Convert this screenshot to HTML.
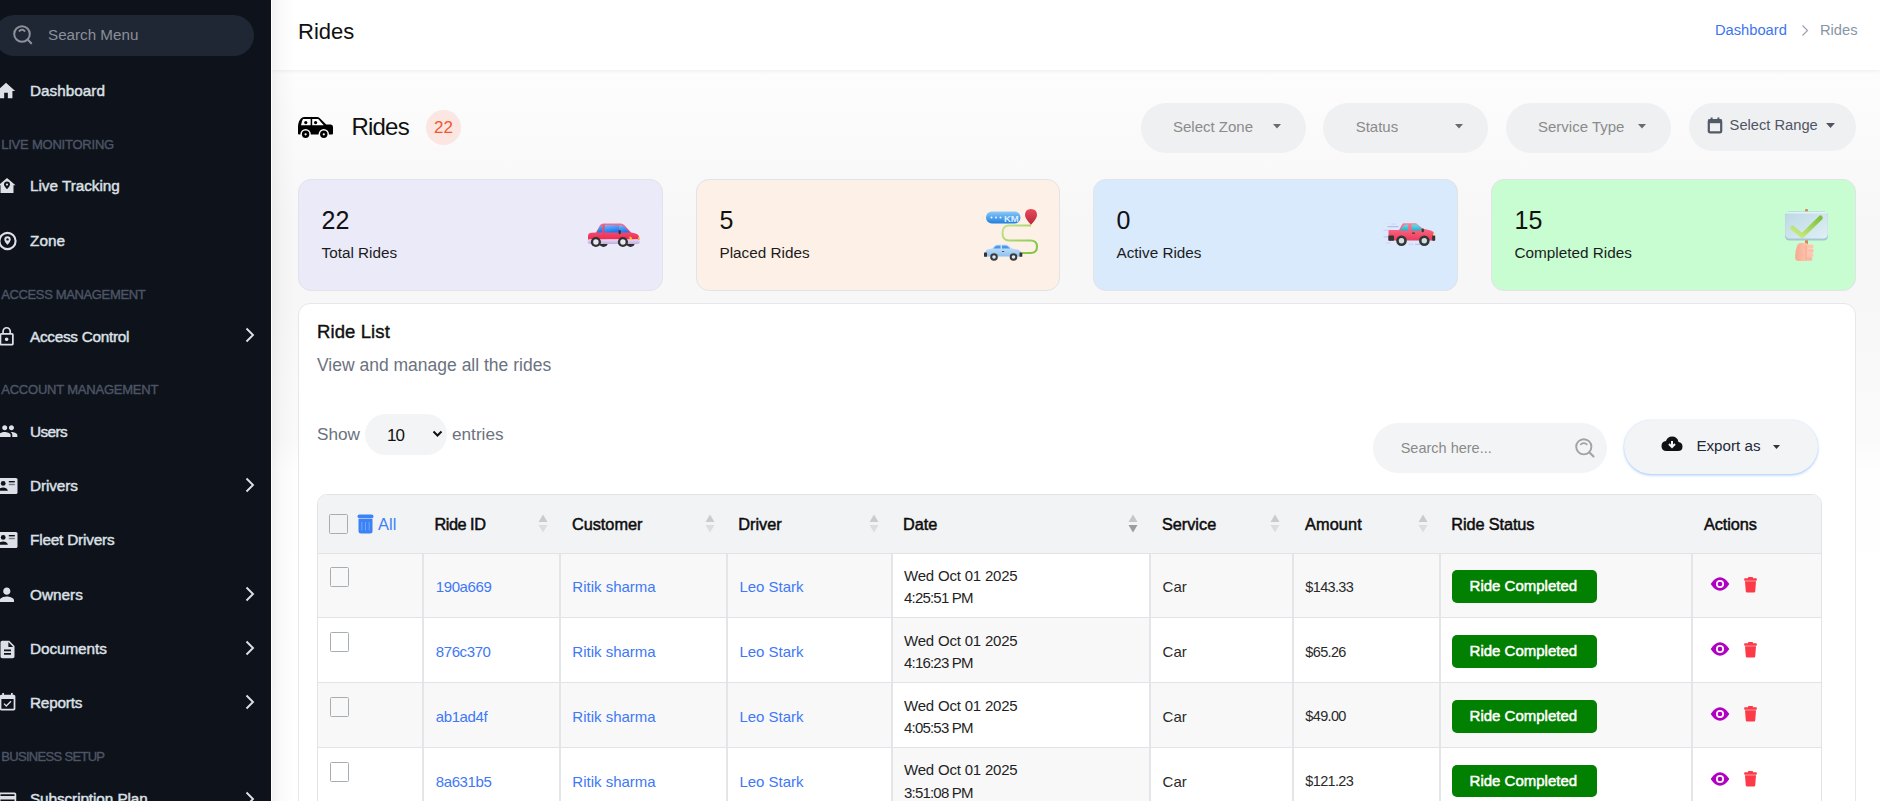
<!DOCTYPE html>
<html><head><meta charset="utf-8"><title>Rides</title>
<style>
*{box-sizing:border-box;margin:0;padding:0}
html,body{width:1880px;height:801px;overflow:hidden}
body{font-family:"Liberation Sans",sans-serif;background:#fff;position:relative;color:#111}
.abs{position:absolute}
.t{position:absolute;white-space:nowrap}
#sb{left:0;top:0;width:271px;height:801px;background:#0e121b;overflow:hidden}
#hdr{left:271px;top:0;width:1609px;height:70px;background:#fff;box-shadow:0 1px 4px rgba(0,0,0,.07)}
.pill{position:absolute;height:50px;border-radius:25px;background:#eff0f2}
.card{position:absolute;top:179px;height:112px;border-radius:13px;border:1px solid #e2e2e9}
#list{left:298px;top:303px;width:1558px;height:520px;background:#fff;border:1px solid #e6e7eb;border-radius:12px}
.cb{position:absolute;width:19px;height:19.7px;border:1.4px solid #a6aeb3;border-radius:1.5px;background:transparent}
</style></head>
<body>
<div class="abs" style="left:271px;top:70px;width:1609px;height:731px;background:linear-gradient(to bottom,#fdfdfd 0px,#f7f7f7 150px,#f7f7f7 230px,#f9f9f9 310px,#fafafa 370px,#fefefe 400px,#fff 731px)"></div>
<div id="hdr" class="abs"></div>
<div class="t" style="left:298px;top:21.18px;font-size:22px;line-height:22px;color:#111;font-weight:normal;letter-spacing:0px;">Rides</div>
<div class="t" style="left:1715px;top:23.16px;font-size:14.7px;line-height:14.7px;color:#3d74f2;font-weight:normal;letter-spacing:0px;">Dashboard</div>
<svg class="abs" style="left:1800px;top:24px" width="10" height="13" viewBox="0 0 10 13"><path d="M2.5 1.5 L7.5 6.5 L2.5 11.5" fill="none" stroke="#9aa3ad" stroke-width="1.2"/></svg>
<div class="t" style="left:1820px;top:23.16px;font-size:14.7px;line-height:14.7px;color:#8796a5;font-weight:normal;letter-spacing:0px;">Rides</div>

<div class="abs" style="left:271px;top:0;width:24px;height:801px;background:linear-gradient(to right,rgba(0,0,0,.055),rgba(0,0,0,.02) 10px,rgba(0,0,0,0))"></div>
<div class="abs" style="left:271px;top:0;width:1px;height:801px;background:#fff"></div>
<div id="sb" class="abs">
  <div class="abs" style="left:-6px;top:15px;width:260px;height:41px;border-radius:21px;background:#1f2735"></div>
  <svg class="abs" style="left:12px;top:24px" width="22" height="22" viewBox="0 0 22 22"><circle cx="10" cy="10" r="7.8" fill="none" stroke="#8b9099" stroke-width="2"/><path d="M7.4 7 Q10 4.6 12.6 7" fill="none" stroke="#8b9099" stroke-width="1.8" stroke-linecap="round"/><path d="M15.6 15.6 L19.2 19.2" stroke="#8b9099" stroke-width="2.1" stroke-linecap="round"/></svg>
  <div class="t" style="left:48px;top:27.13px;font-size:15.2px;line-height:15.2px;color:#8b9099;font-weight:normal;letter-spacing:0px;">Search Menu</div>
  <svg class="abs" style="left:-5.2px;top:79.9px" width="22" height="22" viewBox="0 0 24 24"><path fill="#dde0e6" d="M10 20v-6h4v6h5v-8h3L12 3 2 12h3v8z"/></svg>
  <div class="t" style="left:30px;top:83.05px;font-size:15.3px;line-height:15.3px;color:#dde0e6;font-weight:normal;letter-spacing:0.02px;-webkit-text-stroke:0.45px #dde0e6;">Dashboard</div>
  <div class="t" style="left:1.2px;top:137.80px;font-size:13px;line-height:13px;color:#4d5564;font-weight:normal;letter-spacing:-0.22px;-webkit-text-stroke:0.4px #4d5564;">LIVE MONITORING</div>
  <svg class="abs" style="left:-1px;top:177px" width="18" height="17" viewBox="0 0 18 17"><path fill="#dde0e6" d="M8 1 L16.5 8.2 H14.5 V16 H1.5 V8.2 H-0.5 Z"/><path fill="#0e121b" d="M8 4.6 a3 3 0 0 1 3 3 c0 2 -3 4.6 -3 4.6 c0 0 -3 -2.6 -3 -4.6 a3 3 0 0 1 3 -3z"/><circle cx="8" cy="7.6" r="1.1" fill="#dde0e6"/></svg>
  <div class="t" style="left:30px;top:178.35px;font-size:15.3px;line-height:15.3px;color:#dde0e6;font-weight:normal;letter-spacing:-0.03px;-webkit-text-stroke:0.45px #dde0e6;">Live Tracking</div>
  <svg class="abs" style="left:-2px;top:231px" width="20" height="20" viewBox="0 0 20 20"><circle cx="9.5" cy="10" r="8.1" fill="none" stroke="#dde0e6" stroke-width="2.1"/><path fill="#dde0e6" d="M9.5 5.2 a3.2 3.2 0 0 1 3.2 3.2 c0 2.2 -3.2 5.4 -3.2 5.4 c0 0 -3.2 -3.2 -3.2 -5.4 a3.2 3.2 0 0 1 3.2 -3.2z"/><circle cx="9.5" cy="8.4" r="1.2" fill="#0e121b"/></svg>
  <div class="t" style="left:30px;top:232.95px;font-size:15.3px;line-height:15.3px;color:#dde0e6;font-weight:normal;letter-spacing:0.04px;-webkit-text-stroke:0.45px #dde0e6;">Zone</div>
  <div class="t" style="left:1.2px;top:288.10px;font-size:13px;line-height:13px;color:#4d5564;font-weight:normal;letter-spacing:-0.36px;-webkit-text-stroke:0.4px #4d5564;">ACCESS MANAGEMENT</div>
  <svg class="abs" style="left:-3.7px;top:325.5px" width="21.3" height="21.3" viewBox="0 0 24 24"><path fill="#dde0e6" d="M12 17c1.1 0 2-.9 2-2s-.9-2-2-2-2 .9-2 2 .9 2 2 2zm6-9h-1V6c0-2.76-2.24-5-5-5S7 3.24 7 6v2H6c-1.1 0-2 .9-2 2v10c0 1.1.9 2 2 2h12c1.1 0 2-.9 2-2V10c0-1.1-.9-2-2-2zM8.9 6c0-1.71 1.39-3.1 3.1-3.1s3.1 1.39 3.1 3.1v2H8.9V6zM18 20H6V10h12v10z"/></svg>
  <div class="t" style="left:30px;top:328.65px;font-size:15.3px;line-height:15.3px;color:#dde0e6;font-weight:normal;letter-spacing:-0.27px;-webkit-text-stroke:0.45px #dde0e6;">Access Control</div>
  <svg class="abs" style="left:244px;top:327px" width="12" height="16" viewBox="0 0 12 16"><path d="M2.5 1.5 L9 8 L2.5 14.5" fill="none" stroke="#dde0e6" stroke-width="1.9"/></svg>
  <div class="t" style="left:1.2px;top:383.20px;font-size:13px;line-height:13px;color:#4d5564;font-weight:normal;letter-spacing:-0.21px;-webkit-text-stroke:0.4px #4d5564;">ACCOUNT MANAGEMENT</div>
  <svg class="abs" style="left:-2.3px;top:421px" width="20.2" height="20.2" viewBox="0 0 24 24"><path fill="#dde0e6" d="M16 11c1.66 0 2.99-1.34 2.99-3S17.66 5 16 5c-1.66 0-3 1.34-3 3s1.34 3 3 3zm-8 0c1.66 0 2.99-1.34 2.99-3S9.66 5 8 5C6.34 5 5 6.34 5 8s1.34 3 3 3zm0 2c-2.33 0-7 1.17-7 3.5V19h14v-2.5c0-2.33-4.67-3.5-7-3.5zm8 0c-.29 0-.62.02-.97.05 1.16.84 1.97 1.97 1.97 3.45V19h6v-2.5c0-2.33-4.67-3.5-7-3.5z"/></svg>
  <div class="t" style="left:30px;top:423.55px;font-size:15.3px;line-height:15.3px;color:#dde0e6;font-weight:normal;letter-spacing:-0.56px;-webkit-text-stroke:0.45px #dde0e6;">Users</div>
  <svg class="abs" style="left:-1px;top:478px" width="19" height="16" viewBox="0 0 19 16"><rect x="0" y="0" width="18.5" height="16" rx="1.6" fill="#dde0e6"/><circle cx="4.2" cy="5.4" r="2.4" fill="#0e121b"/><path fill="#0e121b" d="M-0.5 12.8 c0.5-2.4 2.6-3.4 4.7-3.4 s4.2 1 4.7 3.4 z"/><rect x="9.8" y="3" width="6" height="1.4" fill="#0e121b"/><rect x="9.8" y="5.8" width="6" height="1.4" fill="#777b84"/></svg>
  <div class="t" style="left:30px;top:478.05px;font-size:15.3px;line-height:15.3px;color:#dde0e6;font-weight:normal;letter-spacing:-0.11px;-webkit-text-stroke:0.45px #dde0e6;">Drivers</div>
  <svg class="abs" style="left:244px;top:477px" width="12" height="16" viewBox="0 0 12 16"><path d="M2.5 1.5 L9 8 L2.5 14.5" fill="none" stroke="#dde0e6" stroke-width="1.9"/></svg>
  <svg class="abs" style="left:-1px;top:532px" width="19" height="16" viewBox="0 0 19 16"><rect x="0" y="0" width="18.5" height="16" rx="1.6" fill="#dde0e6"/><circle cx="4.2" cy="5.4" r="2.4" fill="#0e121b"/><path fill="#0e121b" d="M-0.5 12.8 c0.5-2.4 2.6-3.4 4.7-3.4 s4.2 1 4.7 3.4 z"/><rect x="9.8" y="3" width="6" height="1.4" fill="#0e121b"/><rect x="9.8" y="5.8" width="6" height="1.4" fill="#777b84"/></svg>
  <div class="t" style="left:30px;top:532.05px;font-size:15.3px;line-height:15.3px;color:#dde0e6;font-weight:normal;letter-spacing:-0.17px;-webkit-text-stroke:0.45px #dde0e6;">Fleet Drivers</div>
  <svg class="abs" style="left:-4px;top:584.4px" width="21.6" height="21.6" viewBox="0 0 24 24"><path fill="#dde0e6" d="M12 12c2.21 0 4-1.79 4-4s-1.79-4-4-4-4 1.79-4 4 1.79 4 4 4zm0 2c-2.67 0-8 1.34-8 4v2h16v-2c0-2.66-5.33-4-8-4z"/></svg>
  <div class="t" style="left:30px;top:587.05px;font-size:15.3px;line-height:15.3px;color:#dde0e6;font-weight:normal;letter-spacing:0.02px;-webkit-text-stroke:0.45px #dde0e6;">Owners</div>
  <svg class="abs" style="left:244px;top:586px" width="12" height="16" viewBox="0 0 12 16"><path d="M2.5 1.5 L9 8 L2.5 14.5" fill="none" stroke="#dde0e6" stroke-width="1.9"/></svg>
  <svg class="abs" style="left:-3.5px;top:638.5px" width="21" height="21" viewBox="0 0 24 24"><path fill="#dde0e6" d="M14 2H6c-1.1 0-1.99.9-1.99 2L4 20c0 1.1.89 2 1.99 2H18c1.1 0 2-.9 2-2V8l-6-6zm2 16H8v-2h8v2zm0-4H8v-2h8v2zm-3-5V3.5L18.5 9H13z"/></svg>
  <div class="t" style="left:30px;top:641.05px;font-size:15.3px;line-height:15.3px;color:#dde0e6;font-weight:normal;letter-spacing:-0.07px;-webkit-text-stroke:0.45px #dde0e6;">Documents</div>
  <svg class="abs" style="left:244px;top:640px" width="12" height="16" viewBox="0 0 12 16"><path d="M2.5 1.5 L9 8 L2.5 14.5" fill="none" stroke="#dde0e6" stroke-width="1.9"/></svg>
  <svg class="abs" style="left:-3.4px;top:692.4px" width="21" height="21" viewBox="0 0 24 24"><path fill="#dde0e6" d="M16.53 11.06L15.47 10l-4.88 4.88-2.12-2.12-1.06 1.06L10.59 17l5.94-5.94zM19 3h-1V1h-2v2H8V1H6v2H5c-1.11 0-1.99.9-1.99 2L3 19c0 1.1.89 2 2 2h14c1.1 0 2-.9 2-2V5c0-1.1-.9-2-2-2zm0 16H5V8h14v11z"/></svg>
  <div class="t" style="left:30px;top:695.05px;font-size:15.3px;line-height:15.3px;color:#dde0e6;font-weight:normal;letter-spacing:-0.19px;-webkit-text-stroke:0.45px #dde0e6;">Reports</div>
  <svg class="abs" style="left:244px;top:694px" width="12" height="16" viewBox="0 0 12 16"><path d="M2.5 1.5 L9 8 L2.5 14.5" fill="none" stroke="#dde0e6" stroke-width="1.9"/></svg>
  <div class="t" style="left:1.2px;top:749.80px;font-size:13px;line-height:13px;color:#4d5564;font-weight:normal;letter-spacing:-0.68px;-webkit-text-stroke:0.4px #4d5564;">BUSINESS SETUP</div>
  <svg class="abs" style="left:-3.45px;top:788.5px" width="21" height="21" viewBox="0 0 24 24"><path fill="#dde0e6" d="M20 4H4c-1.11 0-1.99.89-1.99 2L2 18c0 1.11.89 2 2 2h16c1.11 0 2-.89 2-2V6c0-1.11-.89-2-2-2zm0 14H4v-6h16v6zm0-10H4V6h16v2z"/></svg>
  <div class="t" style="left:30px;top:791.35px;font-size:15.3px;line-height:15.3px;color:#dde0e6;font-weight:normal;letter-spacing:-0.08px;-webkit-text-stroke:0.45px #dde0e6;">Subscription Plan</div>
  <svg class="abs" style="left:244px;top:790.5px" width="12" height="16" viewBox="0 0 12 16"><path d="M2.5 1.5 L9 8 L2.5 14.5" fill="none" stroke="#dde0e6" stroke-width="1.9"/></svg>
</div>
<svg class="abs" style="left:298px;top:117px" width="36" height="22" viewBox="0 0 36 22">
<path d="M0 9.5 Q0.3 4 3 1.5 Q4 0 6 0 H19.2 Q20.6 0 21.6 1 L28.2 7.5 H32.8 Q35 7.5 35 10 V16.6 Q35 17.6 34 17.6 H1 Q0 17.6 0 16.6 Z" fill="#000"/>
<path d="M5 2.1 H12.6 V8.2 H3 Q3.6 4 5 2.1 Z" fill="#fff"/>
<path d="M14.2 2.1 H20.2 L25.8 8.2 H14.2 Z" fill="#fff"/>
<circle cx="7.8" cy="5.6" r="1.6" fill="#000"/><circle cx="17.6" cy="5.6" r="1.6" fill="#000"/>
<circle cx="7.6" cy="17.3" r="5.2" fill="#fcfcfc"/><circle cx="7.6" cy="17.3" r="3.7" fill="#000"/><circle cx="7.6" cy="17.3" r="1.1" fill="#fff"/>
<circle cx="25.8" cy="17.3" r="5.2" fill="#fcfcfc"/><circle cx="25.8" cy="17.3" r="3.7" fill="#000"/><circle cx="25.8" cy="17.3" r="1.1" fill="#fff"/>
</svg>
<div class="t" style="left:351.5px;top:115.48px;font-size:24px;line-height:24px;color:#111;font-weight:normal;letter-spacing:-0.8px;">Rides</div>
<div class="abs" style="left:425.7px;top:109.8px;width:35px;height:35px;border-radius:50%;background:#fbe6e1"></div>
<div class="t" style="left:434px;top:118.81px;font-size:17px;line-height:17px;color:#f2572f;font-weight:normal;letter-spacing:0px;">22</div>
<div class="pill" style="left:1141px;top:103px;width:165px"></div>
<div class="t" style="left:1173px;top:119.20px;font-size:15px;line-height:15px;color:#8b8b8b;font-weight:normal;letter-spacing:0px;">Select Zone</div>
<svg class="abs" style="left:1273px;top:124px" width="8" height="4.5" viewBox="0 0 8 4.5"><path d="M0 0 H8 L4 4.5 Z" fill="#6b6b6b"/></svg>
<div class="pill" style="left:1323px;top:103px;width:165px"></div>
<div class="t" style="left:1355.7px;top:119.20px;font-size:15px;line-height:15px;color:#8b8b8b;font-weight:normal;letter-spacing:0px;">Status</div>
<svg class="abs" style="left:1455px;top:124px" width="8" height="4.5" viewBox="0 0 8 4.5"><path d="M0 0 H8 L4 4.5 Z" fill="#6b6b6b"/></svg>
<div class="pill" style="left:1506px;top:103px;width:165px"></div>
<div class="t" style="left:1538px;top:119.20px;font-size:15px;line-height:15px;color:#8b8b8b;font-weight:normal;letter-spacing:0px;">Service Type</div>
<svg class="abs" style="left:1638px;top:124px" width="8" height="4.5" viewBox="0 0 8 4.5"><path d="M0 0 H8 L4 4.5 Z" fill="#6b6b6b"/></svg>
<div class="pill" style="left:1689px;top:103px;width:167px;height:48px"></div>
<svg class="abs" style="left:1707px;top:117px" width="16" height="17" viewBox="0 0 16 17"><rect x="1.8" y="3.2" width="12.4" height="12.2" rx="1.2" fill="none" stroke="#525a66" stroke-width="2.2"/><rect x="1" y="2.6" width="14" height="3.6" fill="#525a66"/><rect x="3.6" y="0.5" width="2" height="3" fill="#525a66"/><rect x="10.4" y="0.5" width="2" height="3" fill="#525a66"/></svg>
<div class="t" style="left:1729.6px;top:118.26px;font-size:14.7px;line-height:14.7px;color:#4f5662;font-weight:normal;letter-spacing:0px;">Select Range</div>
<svg class="abs" style="left:1826px;top:123px" width="9" height="5" viewBox="0 0 8 4.5"><path d="M0 0 H8 L4 4.5 Z" fill="#4f5662"/></svg>

<div class="card" style="left:298px;width:365px;background:#ebeaf8"></div>
<div class="t" style="left:321.5px;top:207.84px;font-size:25px;line-height:25px;color:#111;font-weight:normal;letter-spacing:0px;">22</div>
<div class="t" style="left:321.5px;top:245.25px;font-size:15.3px;line-height:15.3px;color:#1c1c1c;font-weight:normal;letter-spacing:0px;">Total Rides</div>
<div class="card" style="left:696px;width:364px;background:#fdf1e7"></div>
<div class="t" style="left:719.5px;top:207.84px;font-size:25px;line-height:25px;color:#111;font-weight:normal;letter-spacing:0px;">5</div>
<div class="t" style="left:719.5px;top:245.25px;font-size:15.3px;line-height:15.3px;color:#1c1c1c;font-weight:normal;letter-spacing:0px;">Placed Rides</div>
<div class="card" style="left:1093px;width:365px;background:#d8eafc"></div>
<div class="t" style="left:1116.5px;top:207.84px;font-size:25px;line-height:25px;color:#111;font-weight:normal;letter-spacing:0px;">0</div>
<div class="t" style="left:1116.5px;top:245.25px;font-size:15.3px;line-height:15.3px;color:#1c1c1c;font-weight:normal;letter-spacing:0px;">Active Rides</div>
<div class="card" style="left:1491px;width:365px;background:#c8fcd1"></div>
<div class="t" style="left:1514.5px;top:207.84px;font-size:25px;line-height:25px;color:#111;font-weight:normal;letter-spacing:0px;">15</div>
<div class="t" style="left:1514.5px;top:245.25px;font-size:15.3px;line-height:15.3px;color:#1c1c1c;font-weight:normal;letter-spacing:0px;">Completed Rides</div>
<svg class="abs" style="left:586.5px;top:222.5px" width="55" height="26" viewBox="0 0 55 26">
<defs><linearGradient id="rb" x1="0" y1="0" x2="0" y2="1"><stop offset="0" stop-color="#ff6b82"/><stop offset="1" stop-color="#ec2a55"/></linearGradient>
<linearGradient id="gl" x1="0" y1="0" x2="0.3" y2="1"><stop offset="0" stop-color="#79b8ff"/><stop offset="1" stop-color="#1a78f0"/></linearGradient>
<linearGradient id="sk" x1="0" y1="0" x2="0" y2="1"><stop offset="0" stop-color="#e6dcf4"/><stop offset="1" stop-color="#c2acdc"/></linearGradient></defs>
<circle cx="16.5" cy="19.3" r="4.6" fill="#2e2e2e"/><circle cx="43.5" cy="19.3" r="4.6" fill="#2e2e2e"/>
<path d="M1 16.8 V13 Q1 10.2 4.5 9.8 L9 9.4 L13.2 2 Q14 0.4 16.5 0.4 H33.8 Q35.8 0.4 37.2 1.9 L44.2 9.5 L48.5 10.5 Q52.3 11.6 52.3 15 V16.8 Z" fill="url(#rb)"/>
<path d="M9.6 9.5 L13.2 3.2 Q13.8 2.3 15.3 2.3 V9.5 Z" fill="url(#gl)"/>
<path d="M17.3 2 H30.2 L32.2 4 V9.4 H17.3 Z" fill="url(#gl)"/>
<path d="M31.8 2 H34.2 Q35.4 2 36.4 3 L43 9.4 H33.2 Z" fill="url(#gl)"/>
<rect x="16.2" y="1.5" width="1.4" height="15" fill="#e8395e" opacity=".6"/>
<rect x="31.6" y="7" width="2.2" height="4.2" rx="1" fill="#333"/>
<rect x="0.6" y="16.3" width="52.2" height="4.8" rx="2.4" fill="url(#sk)"/>
<circle cx="8.9" cy="19" r="5.1" fill="#333"/><circle cx="8.9" cy="19" r="2.7" fill="#ebe7f3"/>
<circle cx="35.9" cy="19" r="5.1" fill="#333"/><circle cx="35.9" cy="19" r="2.7" fill="#ebe7f3"/>
<path d="M42.6 13.2 Q44.6 13.4 45 15.5 L44.8 17 H42.6 Z" fill="#ffc83a"/>
<path d="M51 13.5 Q52.3 14 52.4 15.5 V16.6 H51 Z" fill="#ffb020"/>
</svg>
<svg class="abs" style="left:980px;top:205px" width="62" height="60" viewBox="980 205 62 60">
<defs><linearGradient id="km" x1="0" y1="0" x2="0" y2="1"><stop offset="0" stop-color="#8ccaf8"/><stop offset="1" stop-color="#1f7fdf"/></linearGradient>
<linearGradient id="lc" x1="0" y1="0" x2="0" y2="1"><stop offset="0" stop-color="#d6eafc"/><stop offset="1" stop-color="#8cc0f0"/></linearGradient>
<linearGradient id="pn" x1="0" y1="0" x2="0" y2="1"><stop offset="0" stop-color="#e84a5a"/><stop offset="1" stop-color="#b8283a"/></linearGradient>
<linearGradient id="gr" x1="0" y1="0" x2="1" y2="1"><stop offset="0" stop-color="#c4e68e"/><stop offset="1" stop-color="#7cc23e"/></linearGradient></defs>
<rect x="986" y="211.5" width="34.5" height="12" rx="5.8" fill="url(#km)"/>
<circle cx="991.5" cy="217.5" r="1" fill="#e8f4ff"/><circle cx="996" cy="217.5" r="1" fill="#e8f4ff"/><circle cx="1000.5" cy="217.5" r="1" fill="#e8f4ff"/>
<text x="1004" y="221.8" font-family="Liberation Sans" font-weight="bold" font-size="9.6" fill="#dceeff" letter-spacing="-0.3">KM</text>
<path d="M1031 225.5 H1009 Q1002.5 225.5 1002.5 233 Q1002.5 240.5 1009 240.5 H1030.5 Q1037 240.5 1037 246.8 Q1037 253 1030.5 253 H1022" fill="none" stroke="url(#gr)" stroke-width="2"/>
<path d="M1031 209 Q1037 209 1037 215 Q1037 218.5 1031 224.8 Q1025 218.5 1025 215 Q1025 209 1031 209 Z" fill="url(#pn)"/>
<path d="M985.5 252 Q985.5 249.5 988.5 249 L992 248.5 L994.5 245.5 Q995.5 244.3 997.5 244.3 H1006 Q1007.8 244.3 1009 245.6 L1012 248.6 L1017.5 249.4 Q1021 250 1021 253 V256.5 H985.5 Z" fill="url(#lc)"/>
<path d="M993.3 248.6 L995.6 246 Q996.2 245.4 997 245.4 H1000.5 V248.6 Z" fill="#4a98ea"/><path d="M1002 245.4 H1006 Q1006.8 245.4 1007.4 246 L1010 248.6 H1002 Z" fill="#4a98ea"/>
<rect x="1002" y="251" width="2.2" height="1" fill="#555"/>
<rect x="984" y="252.5" width="3" height="4.2" rx=".5" fill="#333"/><rect x="1019.5" y="252.5" width="2.8" height="4.2" rx=".5" fill="#333"/>
<circle cx="994" cy="257" r="3.8" fill="#3a3a3a"/><circle cx="994" cy="257" r="1.8" fill="#d4ecfa"/>
<circle cx="1013.5" cy="257" r="3.8" fill="#3a3a3a"/><circle cx="1013.5" cy="257" r="1.8" fill="#d4ecfa"/>
</svg>
<svg class="abs" style="left:1380px;top:218px" width="60" height="32" viewBox="1380 218 60 32">
<defs><linearGradient id="rb2" x1="0" y1="0" x2="0" y2="1"><stop offset="0" stop-color="#ff7d92"/><stop offset="1" stop-color="#ec3a5e"/></linearGradient>
<linearGradient id="tq" x1="0" y1="0" x2="0" y2="1"><stop offset="0" stop-color="#6adce8"/><stop offset="1" stop-color="#1fb2cc"/></linearGradient></defs>
<g stroke-linecap="round" opacity=".55">
<path d="M1385 224 H1388" stroke="#f3e3a0" stroke-width="1"/><path d="M1392 224 H1395" stroke="#c7b8ef" stroke-width="1"/>
<path d="M1388 226.6 H1398" stroke="#a98ee8" stroke-width="1.2"/>
<path d="M1384 230.3 H1390" stroke="#c7b8ef" stroke-width="1"/>
<path d="M1384 236.9 H1389" stroke="#b39be8" stroke-width="1"/>
<path d="M1386 243 H1390" stroke="#c7b8ef" stroke-width="1"/>
<path d="M1409 244.3 H1413" stroke="#c7b8ef" stroke-width="1"/><path d="M1415.5 244.3 H1419.5" stroke="#a98ee8" stroke-width="1"/>
</g>
<path d="M1388.5 240.4 V231 Q1388.5 230 1389.5 230 H1399 L1402 224.6 Q1402.6 223.3 1404 223.3 H1415.2 Q1416.6 223.3 1417.6 224.4 L1422.4 228.6 L1431 230.4 Q1433.6 231 1434.4 234 L1434.6 240.4 Z" fill="url(#rb2)"/>
<path d="M1399.4 230.6 L1404.6 225 Q1405 224.6 1405.6 224.6 H1408.2 V230.6 Z" fill="url(#tq)"/>
<path d="M1411.6 224.6 H1417 Q1417.6 224.6 1418.2 225.2 L1421.7 229.2 V230.6 H1411.6 Z" fill="url(#tq)"/>
<rect x="1421.6" y="228.4" width="2.3" height="3.8" rx="1" fill="#3a3a3a"/>
<rect x="1412" y="232.5" width="3" height="1.3" rx=".6" fill="#3a3a3a"/>
<rect x="1388.4" y="235.6" width="5.6" height="5.2" rx=".8" fill="#333"/>
<rect x="1432.2" y="235.2" width="3" height="5.6" rx=".8" fill="#333"/>
<rect x="1433" y="233.6" width="1.9" height="2" rx=".6" fill="#f6ec6a"/>
<circle cx="1401.5" cy="240.8" r="5.3" fill="#353535"/><circle cx="1401.5" cy="240.8" r="2.7" fill="#cfe0e4"/>
<circle cx="1424.3" cy="240.8" r="5.3" fill="#353535"/><circle cx="1424.3" cy="240.8" r="2.7" fill="#cfe0e4"/>
</svg>
<svg class="abs" style="left:1780px;top:205px" width="54" height="60" viewBox="1780 205 54 60">
<defs><linearGradient id="sg" x1="0" y1="0" x2="1" y2="1"><stop offset="0" stop-color="#bcd8e4"/><stop offset="1" stop-color="#e0f0f6"/></linearGradient>
<linearGradient id="ck" x1="0" y1="1" x2="1" y2="0"><stop offset="0" stop-color="#d0ee88"/><stop offset="1" stop-color="#7cc23a"/></linearGradient>
<linearGradient id="hd" x1="0" y1="0" x2="1" y2="0"><stop offset="0" stop-color="#f8a890"/><stop offset="1" stop-color="#ffc6b2"/></linearGradient></defs>
<rect x="1805" y="209" width="3" height="36" rx="1.2" fill="#d4884e"/>
<rect x="1785" y="211.5" width="43" height="29" rx="4.5" fill="#a6c6d4"/>
<rect x="1785.2" y="211.5" width="42.6" height="27" rx="4.5" fill="url(#sg)"/>
<rect x="1786" y="212" width="41" height="1.5" rx=".7" fill="#e8f6fa" opacity=".8"/>
<path d="M1792.5 228 L1802 235.8 L1820.5 217.8" fill="none" stroke="url(#ck)" stroke-width="4.6" stroke-linecap="round" stroke-linejoin="round"/>
<path d="M1797 246 Q1795 252 1795.2 258 Q1795.5 261 1798.5 261 H1806 Q1808 261 1808 259 V245.5 Q1808 243 1805.5 243 H1801 Q1798 243 1797 246 Z" fill="url(#hd)"/>
<rect x="1806" y="244.5" width="7.5" height="4" rx="2" fill="#ffc4b0"/>
<rect x="1806" y="248.8" width="7.8" height="4" rx="2" fill="#ffbfaa"/>
<rect x="1806" y="253" width="7.5" height="4" rx="2" fill="#ffc4b0"/>
<rect x="1806" y="257" width="6.5" height="3.8" rx="1.9" fill="#fbb8a2"/>
<path d="M1806 245 V260" stroke="#e8a070" stroke-width=".8" opacity=".7"/>
</svg>

<div id="list" class="abs"></div>
<div class="t" style="left:317px;top:322.64px;font-size:18.5px;line-height:18.5px;color:#111;font-weight:normal;letter-spacing:0.1px;-webkit-text-stroke:0.4px #111;">Ride List</div>
<div class="t" style="left:317px;top:357.09px;font-size:17.5px;line-height:17.5px;color:#6b7280;font-weight:normal;letter-spacing:0px;">View and manage all the rides</div>
<div class="t" style="left:317px;top:426.34px;font-size:17.2px;line-height:17.2px;color:#6b7280;font-weight:normal;letter-spacing:0px;">Show</div>
<div class="abs" style="left:365px;top:414px;width:82px;height:41px;border-radius:20.5px;background:#f3f4f6"></div>
<div class="t" style="left:387px;top:426.51px;font-size:17px;line-height:17px;color:#111;font-weight:normal;letter-spacing:-1px;">10</div>
<svg class="abs" style="left:431.5px;top:430px" width="11" height="8" viewBox="0 0 11 8"><path d="M1.5 1.5 L5.5 5.5 L9.5 1.5" fill="none" stroke="#111" stroke-width="2"/></svg>
<div class="t" style="left:452px;top:426.34px;font-size:17.2px;line-height:17.2px;color:#6b7280;font-weight:normal;letter-spacing:0px;">entries</div>
<div class="abs" style="left:1373px;top:423px;width:234px;height:50px;border-radius:25px;background:#f3f4f6"></div>
<div class="t" style="left:1400.7px;top:441.23px;font-size:14.5px;line-height:14.5px;color:#8a8a8a;font-weight:normal;letter-spacing:0px;">Search here...</div>
<svg class="abs" style="left:1574px;top:437px" width="22" height="22" viewBox="0 0 22 22"><circle cx="9.8" cy="9.8" r="7.6" fill="none" stroke="#a0a3a8" stroke-width="1.9"/><path d="M6.8 7.4 Q9.8 5 12.8 7.4" fill="none" stroke="#a0a3a8" stroke-width="1.7" stroke-linecap="round"/><path d="M15.5 15.5 L19.5 19.5" stroke="#a0a3a8" stroke-width="2.1" stroke-linecap="round"/></svg>
<div class="abs" style="left:1624px;top:420px;width:194px;height:54px;border-radius:27px;background:#f3f4f6;box-shadow:0 1.5px 2.5px rgba(96,165,250,.45),0 0 1.5px rgba(96,165,250,.35)"></div>
<svg class="abs" style="left:1661px;top:435px" width="22" height="18" viewBox="0 0 22 18"><path d="M5.5 16 H17 Q21.5 16 21.5 11.5 Q21.5 7.5 17.5 7 Q16.5 1.5 11 1.5 Q6.5 1.5 5 6 Q0.5 6.5 0.5 11 Q0.5 16 5.5 16 Z" fill="#111"/><path d="M11 6 V11.5 M8 9 L11 12 L14 9" fill="none" stroke="#f3f4f6" stroke-width="2"/></svg>
<div class="t" style="left:1696.4px;top:438.43px;font-size:15.2px;line-height:15.2px;color:#1f2937;font-weight:normal;letter-spacing:0px;">Export as</div>
<svg class="abs" style="left:1773px;top:444px" width="7" height="6" viewBox="0 0 8 4.5"><path d="M0 0 H8 L4 4.5 Z" fill="#333"/></svg>

<div id="tbl" class="abs" style="left:317px;top:494px;width:1505px;height:330px;border:1px solid #e2e3e7;border-radius:10px;overflow:hidden;background:#fff">
<div class="abs" style="left:0;top:58.39999999999998px;width:1505px;height:65px;background:#f8f8f9"></div><div class="abs" style="left:573.7px;top:58.39999999999998px;width:258.0999999999999px;height:65px;background:#fff"></div><div class="abs" style="left:0;top:122.39999999999998px;width:1505px;height:1.5px;background:#e2e3e7"></div>
<div class="abs" style="left:0;top:123.39999999999998px;width:1505px;height:65px;background:#fff"></div><div class="abs" style="left:573.7px;top:123.39999999999998px;width:258.0999999999999px;height:65px;background:#f8f8f9"></div><div class="abs" style="left:0;top:187.39999999999998px;width:1505px;height:1.5px;background:#e2e3e7"></div>
<div class="abs" style="left:0;top:188.20000000000005px;width:1505px;height:65px;background:#f8f8f9"></div><div class="abs" style="left:573.7px;top:188.20000000000005px;width:258.0999999999999px;height:65px;background:#fff"></div><div class="abs" style="left:0;top:252.20000000000005px;width:1505px;height:1.5px;background:#e2e3e7"></div>
<div class="abs" style="left:0;top:253px;width:1505px;height:65px;background:#fff"></div><div class="abs" style="left:573.7px;top:253px;width:258.0999999999999px;height:65px;background:#f8f8f9"></div><div class="abs" style="left:0;top:317px;width:1505px;height:1.5px;background:#e2e3e7"></div>
<div class="abs" style="left:0;top:0;width:1505px;height:59.4px;background:#f2f3f5;border-bottom:1.5px solid #e2e3e7"></div>
<div class="abs" style="left:103.80000000000003px;top:59.4px;width:2px;height:300px;background:#e4e5e9"></div><div class="abs" style="left:241.09999999999997px;top:59.4px;width:2px;height:300px;background:#e4e5e9"></div><div class="abs" style="left:407.99999999999994px;top:59.4px;width:2px;height:300px;background:#e4e5e9"></div><div class="abs" style="left:572.9000000000001px;top:59.4px;width:2px;height:300px;background:#e4e5e9"></div><div class="abs" style="left:831.0px;top:59.4px;width:2px;height:300px;background:#e4e5e9"></div><div class="abs" style="left:974.0px;top:59.4px;width:2px;height:300px;background:#e4e5e9"></div><div class="abs" style="left:1121.0px;top:59.4px;width:2px;height:300px;background:#e4e5e9"></div><div class="abs" style="left:1373.2px;top:59.4px;width:2px;height:300px;background:#e4e5e9"></div>
</div>

<div class="cb" style="left:329px;top:514px"></div>
<svg class="abs" style="left:356.5px;top:513.5px" width="17" height="20" viewBox="0 0 17 20"><rect x="0.5" y="0.6" width="16" height="3.6" rx="1.8" fill="#3b82f6"/><path d="M1.5 4.8 H15.5 V17 Q15.5 19.5 13 19.5 H4 Q1.5 19.5 1.5 17 Z" fill="#3b82f6"/><path d="M4.8 8 V16.5 M8.5 8 V16.5 M12.2 8 V16.5" stroke="#7aa8f8" stroke-width="0.9"/></svg>
<div class="t" style="left:378px;top:515.73px;font-size:16.5px;line-height:16.5px;color:#3b82f6;font-weight:normal;letter-spacing:0px;">All</div>
<div class="t" style="left:434.6px;top:515.90px;font-size:16.3px;line-height:16.3px;color:#0d0d0d;font-weight:normal;letter-spacing:-0.5px;-webkit-text-stroke:0.5px #0d0d0d;">Ride ID</div>
<svg class="abs" style="left:537.8px;top:514px" width="10" height="19" viewBox="0 0 10 19"><path d="M5 0.5 L9.5 8 H0.5 Z" fill="#c9cbcf"/><path d="M5 18.5 L9.5 11 H0.5 Z" fill="#dcdde0"/></svg>
<div class="t" style="left:571.9px;top:515.90px;font-size:16.3px;line-height:16.3px;color:#0d0d0d;font-weight:normal;letter-spacing:0px;-webkit-text-stroke:0.5px #0d0d0d;">Customer</div>
<svg class="abs" style="left:705px;top:514px" width="10" height="19" viewBox="0 0 10 19"><path d="M5 0.5 L9.5 8 H0.5 Z" fill="#c9cbcf"/><path d="M5 18.5 L9.5 11 H0.5 Z" fill="#dcdde0"/></svg>
<div class="t" style="left:738.3px;top:515.90px;font-size:16.3px;line-height:16.3px;color:#0d0d0d;font-weight:normal;letter-spacing:0px;-webkit-text-stroke:0.5px #0d0d0d;">Driver</div>
<svg class="abs" style="left:869.4px;top:514px" width="10" height="19" viewBox="0 0 10 19"><path d="M5 0.5 L9.5 8 H0.5 Z" fill="#c9cbcf"/><path d="M5 18.5 L9.5 11 H0.5 Z" fill="#dcdde0"/></svg>
<div class="t" style="left:903px;top:515.90px;font-size:16.3px;line-height:16.3px;color:#0d0d0d;font-weight:normal;letter-spacing:0px;-webkit-text-stroke:0.5px #0d0d0d;">Date</div>
<svg class="abs" style="left:1127.9px;top:514px" width="10" height="19" viewBox="0 0 10 19"><path d="M5 0.5 L9.5 8 H0.5 Z" fill="#c4c6ca"/><path d="M5 18.5 L9.5 11 H0.5 Z" fill="#9a9ca0"/></svg>
<div class="t" style="left:1161.9px;top:515.90px;font-size:16.3px;line-height:16.3px;color:#0d0d0d;font-weight:normal;letter-spacing:0px;-webkit-text-stroke:0.5px #0d0d0d;">Service</div>
<svg class="abs" style="left:1270px;top:514px" width="10" height="19" viewBox="0 0 10 19"><path d="M5 0.5 L9.5 8 H0.5 Z" fill="#c9cbcf"/><path d="M5 18.5 L9.5 11 H0.5 Z" fill="#dcdde0"/></svg>
<div class="t" style="left:1305.1px;top:515.90px;font-size:16.3px;line-height:16.3px;color:#0d0d0d;font-weight:normal;letter-spacing:0.1px;-webkit-text-stroke:0.5px #0d0d0d;">Amount</div>
<svg class="abs" style="left:1417.9px;top:514px" width="10" height="19" viewBox="0 0 10 19"><path d="M5 0.5 L9.5 8 H0.5 Z" fill="#c9cbcf"/><path d="M5 18.5 L9.5 11 H0.5 Z" fill="#dcdde0"/></svg>
<div class="t" style="left:1451.3px;top:515.90px;font-size:16.3px;line-height:16.3px;color:#0d0d0d;font-weight:normal;letter-spacing:-0.1px;-webkit-text-stroke:0.5px #0d0d0d;">Ride Status</div>
<div class="t" style="left:1704px;top:515.90px;font-size:16.3px;line-height:16.3px;color:#0d0d0d;font-weight:normal;letter-spacing:-0.1px;-webkit-text-stroke:0.5px #0d0d0d;">Actions</div>

<div class="cb" style="left:330.3px;top:567.4px"></div>
<div class="t" style="left:435.8px;top:579.10px;font-size:15px;line-height:15px;color:#4078f6;font-weight:normal;letter-spacing:-0.4px;">190a669</div>
<div class="t" style="left:572.3px;top:579.10px;font-size:15px;line-height:15px;color:#4078f6;font-weight:normal;letter-spacing:0px;">Ritik sharma</div>
<div class="t" style="left:739.4px;top:579.10px;font-size:15px;line-height:15px;color:#4078f6;font-weight:normal;letter-spacing:0px;">Leo Stark</div>
<div class="t" style="left:904px;top:567.70px;font-size:15px;line-height:15px;color:#1f1f1f;font-weight:normal;letter-spacing:-0.2px;">Wed Oct 01 2025</div>
<div class="t" style="left:904px;top:590.10px;font-size:15px;line-height:15px;color:#1f1f1f;font-weight:normal;letter-spacing:-0.8px;">4:25:51 PM</div>
<div class="t" style="left:1162.6px;top:579.10px;font-size:15px;line-height:15px;color:#2a2a2a;font-weight:normal;letter-spacing:0px;">Car</div>
<div class="t" style="left:1305.3px;top:579.53px;font-size:14.5px;line-height:14.5px;color:#2a2a2a;font-weight:normal;letter-spacing:-0.65px;">$143.33</div>
<div class="abs" style="left:1452px;top:570.2px;width:145px;height:32.6px;background:#018001;border-radius:5px"></div>
<div class="t" style="left:1469.6px;top:578.30px;font-size:15px;line-height:15px;color:#fff;font-weight:normal;letter-spacing:0px;-webkit-text-stroke:0.5px #fff;">Ride Completed</div>
<svg class="abs" style="left:1710px;top:576.0px" width="20" height="16" viewBox="0 0 20 16"><path d="M0.7 8 Q5 1.2 10 1.2 Q15 1.2 19.3 8 Q15 14.8 10 14.8 Q5 14.8 0.7 8 Z" fill="#b000c2"/><circle cx="10" cy="8" r="4" fill="#fff"/><circle cx="10" cy="8" r="2.3" fill="#b000c2"/></svg>
<svg class="abs" style="left:1744px;top:576.5px" width="13" height="16" viewBox="0 0 13 16"><rect x="0.2" y="1.3" width="12.6" height="2.4" rx="0.6" fill="#fd3a47"/><rect x="4" y="0" width="5" height="2" rx="0.6" fill="#fd3a47"/><path d="M1 4.3 H12 L11.2 14.5 Q11 15.5 10 15.5 H3 Q2 15.5 1.8 14.5 Z" fill="#fd3a47"/></svg>
<div class="cb" style="left:330.3px;top:632.4px"></div>
<div class="t" style="left:435.8px;top:644.10px;font-size:15px;line-height:15px;color:#4078f6;font-weight:normal;letter-spacing:-0.4px;">876c370</div>
<div class="t" style="left:572.3px;top:644.10px;font-size:15px;line-height:15px;color:#4078f6;font-weight:normal;letter-spacing:0px;">Ritik sharma</div>
<div class="t" style="left:739.4px;top:644.10px;font-size:15px;line-height:15px;color:#4078f6;font-weight:normal;letter-spacing:0px;">Leo Stark</div>
<div class="t" style="left:904px;top:632.70px;font-size:15px;line-height:15px;color:#1f1f1f;font-weight:normal;letter-spacing:-0.2px;">Wed Oct 01 2025</div>
<div class="t" style="left:904px;top:655.10px;font-size:15px;line-height:15px;color:#1f1f1f;font-weight:normal;letter-spacing:-0.8px;">4:16:23 PM</div>
<div class="t" style="left:1162.6px;top:644.10px;font-size:15px;line-height:15px;color:#2a2a2a;font-weight:normal;letter-spacing:0px;">Car</div>
<div class="t" style="left:1305.3px;top:644.53px;font-size:14.5px;line-height:14.5px;color:#2a2a2a;font-weight:normal;letter-spacing:-0.65px;">$65.26</div>
<div class="abs" style="left:1452px;top:635.2px;width:145px;height:32.6px;background:#018001;border-radius:5px"></div>
<div class="t" style="left:1469.6px;top:643.30px;font-size:15px;line-height:15px;color:#fff;font-weight:normal;letter-spacing:0px;-webkit-text-stroke:0.5px #fff;">Ride Completed</div>
<svg class="abs" style="left:1710px;top:641.0px" width="20" height="16" viewBox="0 0 20 16"><path d="M0.7 8 Q5 1.2 10 1.2 Q15 1.2 19.3 8 Q15 14.8 10 14.8 Q5 14.8 0.7 8 Z" fill="#b000c2"/><circle cx="10" cy="8" r="4" fill="#fff"/><circle cx="10" cy="8" r="2.3" fill="#b000c2"/></svg>
<svg class="abs" style="left:1744px;top:641.5px" width="13" height="16" viewBox="0 0 13 16"><rect x="0.2" y="1.3" width="12.6" height="2.4" rx="0.6" fill="#fd3a47"/><rect x="4" y="0" width="5" height="2" rx="0.6" fill="#fd3a47"/><path d="M1 4.3 H12 L11.2 14.5 Q11 15.5 10 15.5 H3 Q2 15.5 1.8 14.5 Z" fill="#fd3a47"/></svg>
<div class="cb" style="left:330.3px;top:697.2px"></div>
<div class="t" style="left:435.8px;top:708.90px;font-size:15px;line-height:15px;color:#4078f6;font-weight:normal;letter-spacing:-0.4px;">ab1ad4f</div>
<div class="t" style="left:572.3px;top:708.90px;font-size:15px;line-height:15px;color:#4078f6;font-weight:normal;letter-spacing:0px;">Ritik sharma</div>
<div class="t" style="left:739.4px;top:708.90px;font-size:15px;line-height:15px;color:#4078f6;font-weight:normal;letter-spacing:0px;">Leo Stark</div>
<div class="t" style="left:904px;top:697.50px;font-size:15px;line-height:15px;color:#1f1f1f;font-weight:normal;letter-spacing:-0.2px;">Wed Oct 01 2025</div>
<div class="t" style="left:904px;top:719.90px;font-size:15px;line-height:15px;color:#1f1f1f;font-weight:normal;letter-spacing:-0.8px;">4:05:53 PM</div>
<div class="t" style="left:1162.6px;top:708.90px;font-size:15px;line-height:15px;color:#2a2a2a;font-weight:normal;letter-spacing:0px;">Car</div>
<div class="t" style="left:1305.3px;top:709.33px;font-size:14.5px;line-height:14.5px;color:#2a2a2a;font-weight:normal;letter-spacing:-0.65px;">$49.00</div>
<div class="abs" style="left:1452px;top:700.0px;width:145px;height:32.6px;background:#018001;border-radius:5px"></div>
<div class="t" style="left:1469.6px;top:708.10px;font-size:15px;line-height:15px;color:#fff;font-weight:normal;letter-spacing:0px;-webkit-text-stroke:0.5px #fff;">Ride Completed</div>
<svg class="abs" style="left:1710px;top:705.8px" width="20" height="16" viewBox="0 0 20 16"><path d="M0.7 8 Q5 1.2 10 1.2 Q15 1.2 19.3 8 Q15 14.8 10 14.8 Q5 14.8 0.7 8 Z" fill="#b000c2"/><circle cx="10" cy="8" r="4" fill="#fff"/><circle cx="10" cy="8" r="2.3" fill="#b000c2"/></svg>
<svg class="abs" style="left:1744px;top:706.3px" width="13" height="16" viewBox="0 0 13 16"><rect x="0.2" y="1.3" width="12.6" height="2.4" rx="0.6" fill="#fd3a47"/><rect x="4" y="0" width="5" height="2" rx="0.6" fill="#fd3a47"/><path d="M1 4.3 H12 L11.2 14.5 Q11 15.5 10 15.5 H3 Q2 15.5 1.8 14.5 Z" fill="#fd3a47"/></svg>
<div class="cb" style="left:330.3px;top:762.0px"></div>
<div class="t" style="left:435.8px;top:773.70px;font-size:15px;line-height:15px;color:#4078f6;font-weight:normal;letter-spacing:-0.4px;">8a631b5</div>
<div class="t" style="left:572.3px;top:773.70px;font-size:15px;line-height:15px;color:#4078f6;font-weight:normal;letter-spacing:0px;">Ritik sharma</div>
<div class="t" style="left:739.4px;top:773.70px;font-size:15px;line-height:15px;color:#4078f6;font-weight:normal;letter-spacing:0px;">Leo Stark</div>
<div class="t" style="left:904px;top:762.30px;font-size:15px;line-height:15px;color:#1f1f1f;font-weight:normal;letter-spacing:-0.2px;">Wed Oct 01 2025</div>
<div class="t" style="left:904px;top:784.70px;font-size:15px;line-height:15px;color:#1f1f1f;font-weight:normal;letter-spacing:-0.8px;">3:51:08 PM</div>
<div class="t" style="left:1162.6px;top:773.70px;font-size:15px;line-height:15px;color:#2a2a2a;font-weight:normal;letter-spacing:0px;">Car</div>
<div class="t" style="left:1305.3px;top:774.13px;font-size:14.5px;line-height:14.5px;color:#2a2a2a;font-weight:normal;letter-spacing:-0.65px;">$121.23</div>
<div class="abs" style="left:1452px;top:764.8px;width:145px;height:32.6px;background:#018001;border-radius:5px"></div>
<div class="t" style="left:1469.6px;top:772.90px;font-size:15px;line-height:15px;color:#fff;font-weight:normal;letter-spacing:0px;-webkit-text-stroke:0.5px #fff;">Ride Completed</div>
<svg class="abs" style="left:1710px;top:770.6px" width="20" height="16" viewBox="0 0 20 16"><path d="M0.7 8 Q5 1.2 10 1.2 Q15 1.2 19.3 8 Q15 14.8 10 14.8 Q5 14.8 0.7 8 Z" fill="#b000c2"/><circle cx="10" cy="8" r="4" fill="#fff"/><circle cx="10" cy="8" r="2.3" fill="#b000c2"/></svg>
<svg class="abs" style="left:1744px;top:771.1px" width="13" height="16" viewBox="0 0 13 16"><rect x="0.2" y="1.3" width="12.6" height="2.4" rx="0.6" fill="#fd3a47"/><rect x="4" y="0" width="5" height="2" rx="0.6" fill="#fd3a47"/><path d="M1 4.3 H12 L11.2 14.5 Q11 15.5 10 15.5 H3 Q2 15.5 1.8 14.5 Z" fill="#fd3a47"/></svg>

</body></html>
